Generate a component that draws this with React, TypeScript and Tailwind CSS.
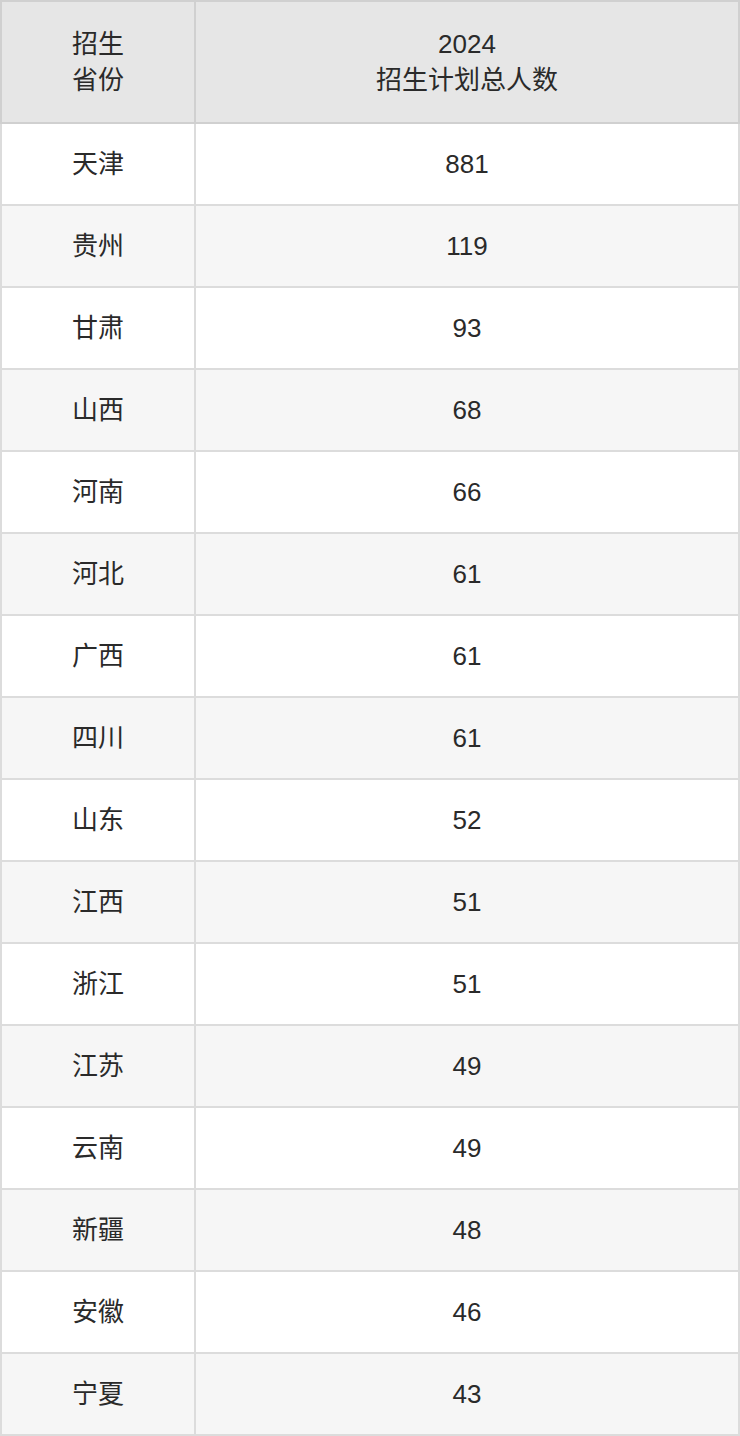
const rows: Array<[string, number]> = [
  ["天津", 881],
  ["贵州", 119],
  ["甘肃", 93],
  ["山西", 68],
  ["河南", 66],
  ["河北", 61],
  ["广西", 61],
  ["四川", 61],
  ["山东", 52],
  ["江西", 51],
  ["浙江", 51],
  ["江苏", 49],
  ["云南", 49],
  ["新疆", 48],
  ["安徽", 46],
  ["宁夏", 43],
];

export default function App() {
  return (
    <div
      className="w-[740px] bg-white text-[#2a2a2a]"
      style={{ fontFamily: '"Liberation Sans", "Noto Sans CJK SC", sans-serif' }}
    >
      <table className="w-full border-collapse text-[26px] text-center">
        <thead>
          <tr className="bg-[#e6e6e6]">
            <th className="w-[194px] h-[122px] border-2 border-[#d0d0d0] font-normal leading-[36px]">
              招生
              <br />
              省份
            </th>
            <th className="h-[122px] border-2 border-[#d0d0d0] font-normal leading-[36px]">
              2024
              <br />
              招生计划总人数
            </th>
          </tr>
        </thead>
        <tbody>
          {rows.map(([name, count], i) => (
            <tr key={name} className={i % 2 === 1 ? "bg-[#f6f6f6]" : "bg-white"}>
              <td className="h-[82px] border-2 border-[#dcdcdc]">{name}</td>
              <td className="h-[82px] border-2 border-[#dcdcdc]">{count}</td>
            </tr>
          ))}
        </tbody>
      </table>
    </div>
  );
}
